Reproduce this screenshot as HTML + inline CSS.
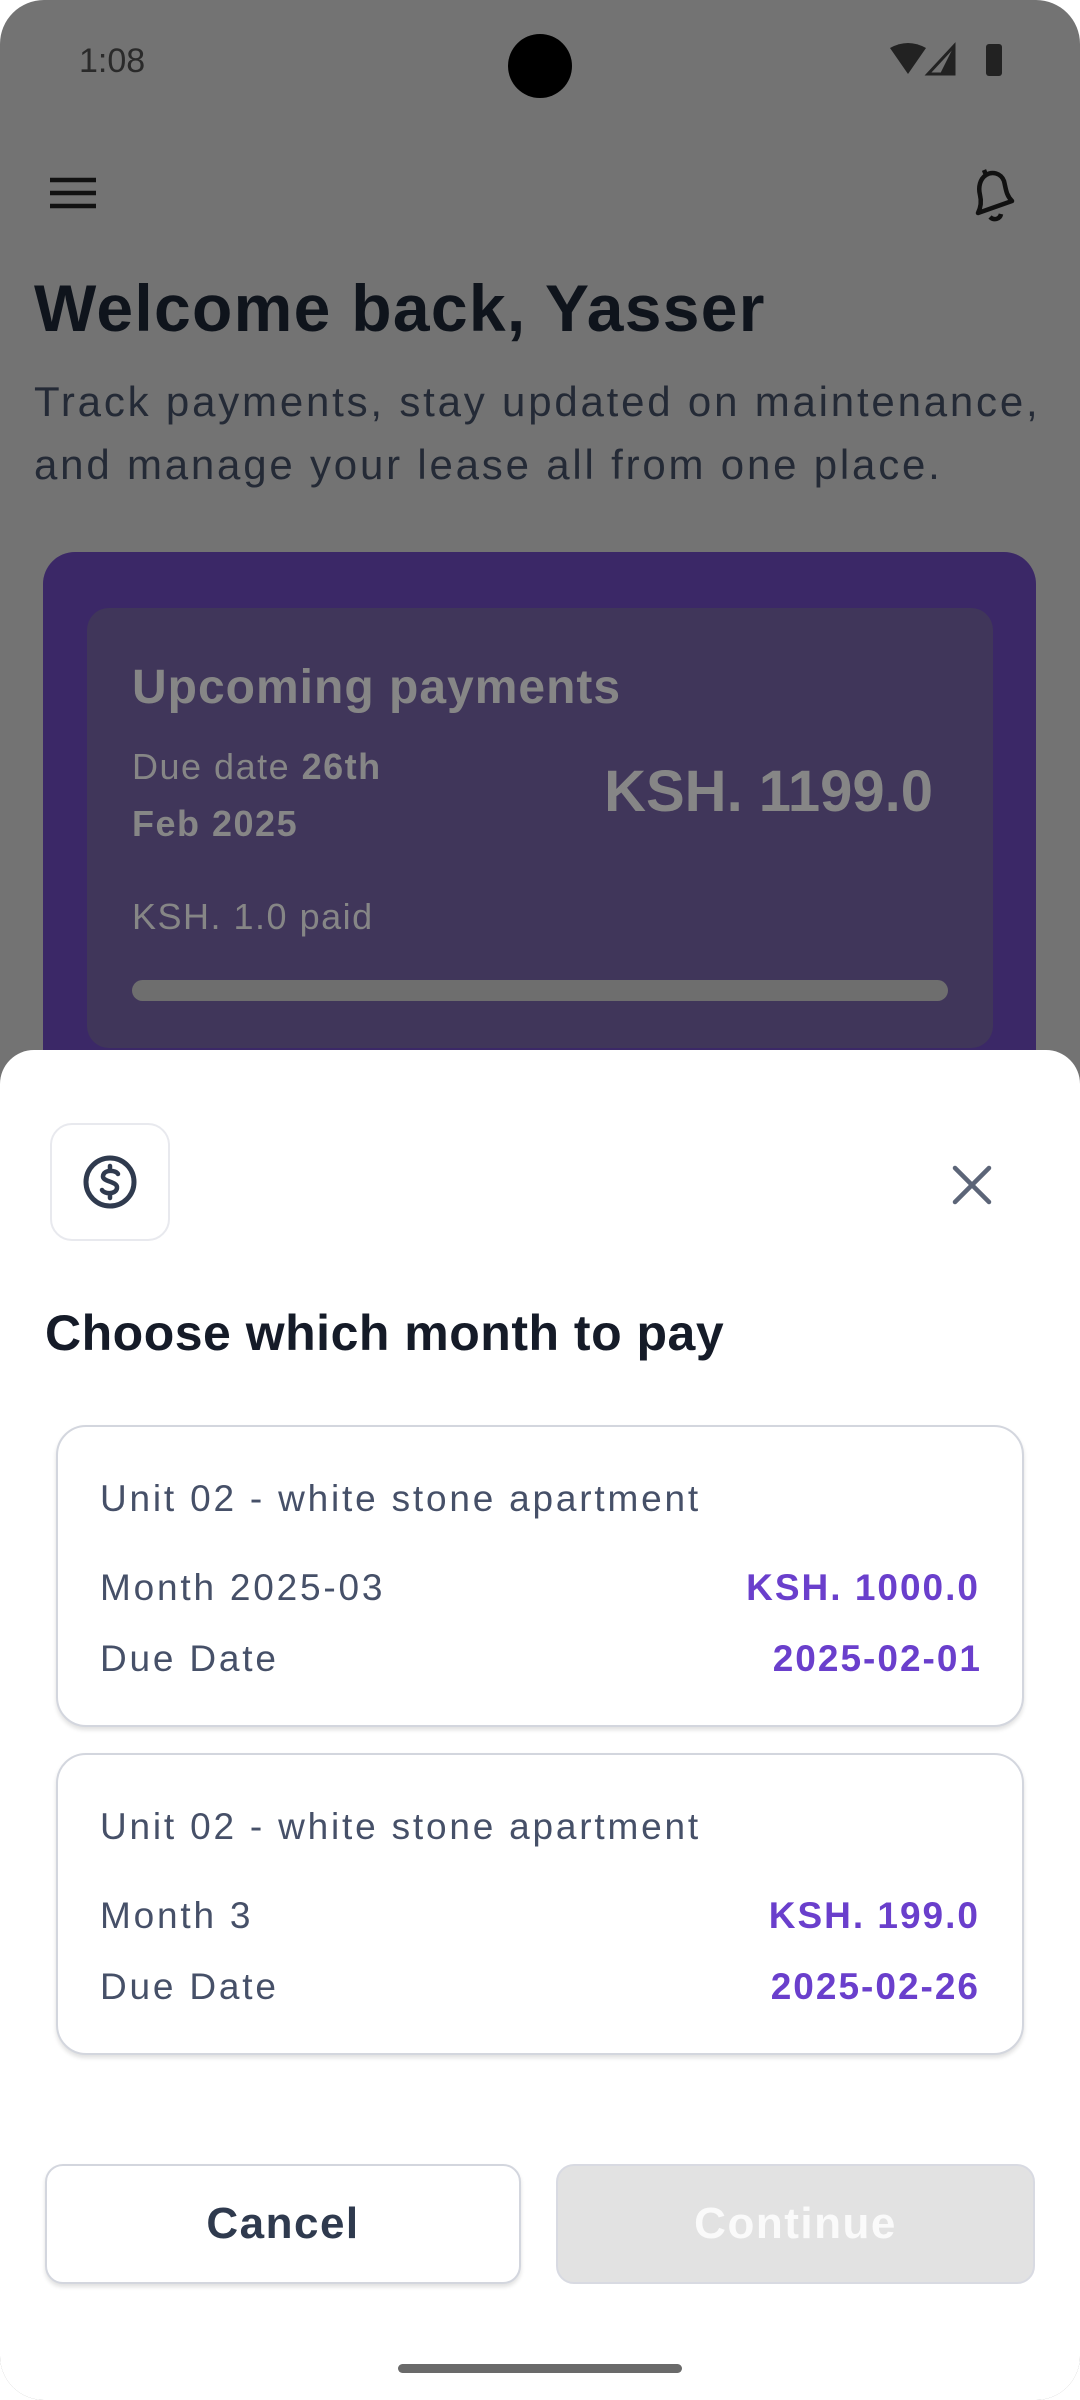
<!DOCTYPE html>
<html><head><meta charset="utf-8"><style>
*{margin:0;padding:0;box-sizing:border-box}
html,body{width:1080px;height:2400px;background:#fff;overflow:hidden;font-family:"Liberation Sans",sans-serif}
.scr{position:absolute;left:0;top:0;width:1080px;height:2400px;background:#737373;border-radius:44px;overflow:hidden}
.abs{position:absolute}
.sheet{position:absolute;left:0;top:1050px;width:1080px;height:1350px;background:#fff;border-radius:34px 34px 0 0}
.card{position:absolute;left:56px;width:968px;height:302px;border:2px solid #d3d6de;border-radius:30px;background:#fff;box-shadow:0 3px 4px rgba(0,0,0,.12)}
.card div{position:absolute;font-size:37px;letter-spacing:2.8px;line-height:40px}
.l{left:42px;color:#465068}
.r{right:42px;color:#6a3fcc;font-weight:bold;letter-spacing:2px !important}
.btn{position:absolute;top:2164px;height:120px;border-radius:18px;font-size:44px;font-weight:bold;letter-spacing:1.5px;display:flex;align-items:center;justify-content:center}
</style></head><body>
<div class="scr">
  <div class="abs" style="left:79px;top:42px;font-size:34px;color:#2a2a2a">1:08</div>
  <div class="abs" style="left:508px;top:34px;width:64px;height:64px;border-radius:50%;background:#000"></div>
  <svg class="abs" style="left:888px;top:40px" width="120" height="40" viewBox="0 0 120 40">
    <path d="M2 8 Q20 -2 38 8 L20 34 Z" fill="#222"/>
    <path d="M66 6 L66 34 L40 34 Z" fill="none" stroke="#222" stroke-width="3"/>
    <path d="M66 6 L66 34 L52 34 Z" fill="#222"/>
    <rect x="98" y="4" width="16" height="32" rx="3" fill="#222"/>
  </svg>
  <svg class="abs" style="left:48px;top:175px" width="50" height="40"><g stroke="#111" stroke-width="4.5"><line x1="2" y1="5" x2="48" y2="5"/><line x1="2" y1="18" x2="48" y2="18"/><line x1="2" y1="31" x2="48" y2="31"/></g></svg>
  <svg class="abs" style="left:968px;top:165px" width="56" height="60" viewBox="0 0 56 60"><g fill="none" stroke="#111" stroke-width="4.5" stroke-linejoin="round"><path d="M10 48 L44 36 C38 30 38 24 36 16 C33 8 24 6 18 10 C12 14 10 22 12 30 C14 38 12 44 10 48 Z"/><path d="M22 52 C26 56 32 54 33 49"/><path d="M18 10 L16 5"/></g></svg>
  <div class="abs" style="left:34px;top:270px;font-size:66px;font-weight:bold;color:#0f141c;letter-spacing:1.3px">Welcome back, Yasser</div>
  <div class="abs" style="left:34px;top:370px;font-size:42px;line-height:63px;color:#242a36;letter-spacing:2.8px">Track payments, stay updated on maintenance,<br>and manage your lease all from one place.</div>
  <div class="abs" style="left:43px;top:552px;width:993px;height:600px;background:#3b2867;border-radius:32px"></div>
  <div class="abs" style="left:87px;top:608px;width:906px;height:440px;background:#40365a;border-radius:22px"></div>
  <div class="abs" style="left:132px;top:660px;font-size:48px;font-weight:bold;color:#868686;letter-spacing:1px">Upcoming payments</div>
  <div class="abs" style="left:132px;top:738px;font-size:36px;line-height:57px;color:#868686;letter-spacing:1.5px">Due date <b>26th<br>Feb 2025</b></div>
  <div class="abs" style="right:147px;top:758px;font-size:58px;font-weight:bold;color:#868686">KSH. 1199.0</div>
  <div class="abs" style="left:132px;top:896px;font-size:36px;color:#868686;letter-spacing:1.5px">KSH. 1.0 paid</div>
  <div class="abs" style="left:132px;top:980px;width:816px;height:21px;border-radius:11px;background:#6e6e6e"></div>

  <div class="sheet"></div>
  <div class="abs" style="left:50px;top:1123px;width:120px;height:118px;border:2px solid #e8e9ee;border-radius:22px;background:#fff"></div>
  <svg class="abs" style="left:82px;top:1154px" width="56" height="56" viewBox="0 0 56 56"><circle cx="28" cy="28" r="24" fill="none" stroke="#2f3a4e" stroke-width="5"/><path d="M36 20 C34 16 22 15 21 22 C20 28 36 27 35 34 C34 41 22 40 20 36 M28 12 V16 M28 40 V44" fill="none" stroke="#2f3a4e" stroke-width="4.5" stroke-linecap="round"/></svg>
  <svg class="abs" style="left:952px;top:1165px" width="40" height="40"><g stroke="#5c6578" stroke-width="4.5" stroke-linecap="round"><line x1="3" y1="3" x2="37" y2="37"/><line x1="37" y1="3" x2="3" y2="37"/></g></svg>
  <div class="abs" style="left:45px;top:1304px;font-size:50px;font-weight:bold;color:#151b28;letter-spacing:.5px">Choose which month to pay</div>

  <div class="card" style="top:1425px">
    <div class="l" style="top:52px">Unit 02 - white stone apartment</div>
    <div class="l" style="top:141px">Month 2025-03</div>
    <div class="r" style="top:141px">KSH. 1000.0</div>
    <div class="l" style="top:212px">Due Date</div>
    <div class="r" style="top:212px;right:40px">2025-02-01</div>
  </div>
  <div class="card" style="top:1753px">
    <div class="l" style="top:52px">Unit 02 - white stone apartment</div>
    <div class="l" style="top:141px">Month 3</div>
    <div class="r" style="top:141px">KSH. 199.0</div>
    <div class="l" style="top:212px">Due Date</div>
    <div class="r" style="top:212px">2025-02-26</div>
  </div>

  <div class="btn" style="left:45px;width:476px;background:#fff;border:2px solid #d3d6de;color:#2f3a4e;box-shadow:0 3px 4px rgba(0,0,0,.12)">Cancel</div>
  <div class="btn" style="left:556px;width:479px;background:#e2e2e2;border:2px solid #d8dae2;color:#fafafa">Continue</div>
  <div class="abs" style="left:398px;top:2364px;width:284px;height:9px;border-radius:5px;background:#6a6a6a"></div>
</div>
</body></html>
